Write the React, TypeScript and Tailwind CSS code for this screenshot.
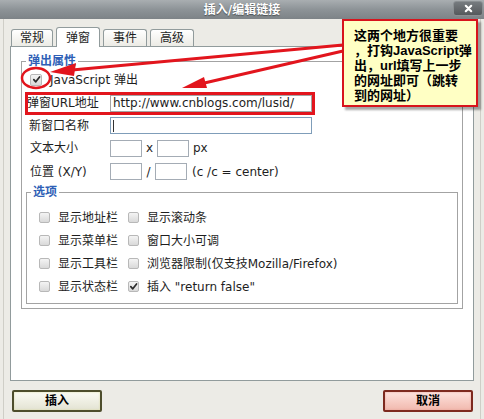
import type { FC, ReactNode } from "react";

const Check: FC<{ checked?: boolean; big?: boolean }> = ({ checked, big }) => (
	<span
		className={`inline-flex shrink-0 items-center justify-center rounded-[2px] border border-[#b8b8b8] bg-gradient-to-b from-[#f4f4f4] to-[#d9d9d9] ${big ? "h-[12px] w-[12px]" : "h-[11px] w-[11px]"}`}
	>
		{checked ? (
			<svg viewBox="0 0 10 10" className="h-[9px] w-[9px]">
				<path d="M2 5.2 L4.2 7.6 L8.4 2.2" fill="none" stroke="#2b2b2b" strokeWidth={1.9} strokeLinecap="round" strokeLinejoin="round" />
			</svg>
		) : null}
	</span>
);

const Legend: FC<{ children: ReactNode }> = ({ children }) => (
	<legend className="ml-[4px] px-[2px] text-[12px] font-bold leading-[14px] text-[#2f5fb6]">{children}</legend>
);

const options: [string, boolean, string, boolean][] = [
	["显示地址栏", false, "显示滚动条", false],
	["显示菜单栏", false, "窗口大小可调", false],
	["显示工具栏", false, "浏览器限制(仅支技Mozilla/Firefox)", false],
	["显示状态栏", false, "插入 \"return false\"", true]
];

const tabs = [
	{ label: "常规", w: "w-[42px]", active: false },
	{ label: "弹窗", w: "w-[44px]", active: true },
	{ label: "事件", w: "w-[44px]", active: false },
	{ label: "高级", w: "w-[44px]", active: false }
];

export default function App() {
	return (
		<div className="relative h-[419px] w-[484px] overflow-hidden bg-[#ecebe6] font-['DejaVu_Sans','Noto_Sans_CJK_SC',sans-serif] text-[12px] text-[#1e1e1e]">
			{/* title bar */}
			<div className="grid h-[19px] grid-cols-[1fr_auto_1fr] items-center bg-gradient-to-b from-[#a9aeb1] via-[#8d9397] to-[#7d8387]">
				<span />
				<span className="text-[12px] font-bold leading-none text-white [text-shadow:0_1px_1px_#4a4f52]">插入/编辑链接</span>
				<div className="flex h-full justify-end pr-[1px] pt-[1px]">
					<div className="flex h-[15px] w-[30px] items-center justify-center rounded-[3px] border border-[#8a8f92] bg-gradient-to-b from-[#767b7f] to-[#55595c]">
						<svg viewBox="0 0 10 10" className="h-[9px] w-[9px]">
							<path d="M2 2 L8 8 M8 2 L2 8" stroke="white" strokeWidth={2.4} strokeLinecap="round" />
						</svg>
					</div>
				</div>
			</div>

			{/* window body */}
			<div className="mx-[3px] flex h-[400px] flex-col border-x border-[#cfcec7]">
				{/* tabs */}
				<div className="flex h-[27px] items-end gap-[3px] pl-[7px]">
					{tabs.map(t => (
						<div
							key={t.label}
							className={`flex items-center justify-center rounded-t-[3px] border border-b-0 border-[#919b9c] text-[12px] ${t.w} ${
								t.active ? "relative z-10 -mb-px h-[20px] bg-white" : "h-[17px] bg-gradient-to-b from-white to-[#ecebe5]"
							}`}
						>
							{t.label}
						</div>
					))}
				</div>

				{/* panel */}
				<div className="ml-[6px] h-[335px] w-[464px] border border-[#919b9c] bg-white pt-[7px]">
					<fieldset className="mx-[10px] border border-[#a3a3a3] pb-[4px]">
						<Legend>弹出属性</Legend>
						<div className="flex flex-col pl-[5px]">
							<div className="flex h-[23px] items-center gap-[8px] pl-[3px]">
								<Check checked big />
								<span>JavaScript 弹出</span>
							</div>
							<div className="flex h-[24px] items-center">
								<span className="w-[83px]">弹窗URL地址</span>
								<div className="flex h-[17px] w-[202px] items-center border border-[#a4a4a4] px-[2px] leading-none">http://www.cnblogs.com/lusid/</div>
							</div>
							<div className="flex h-[21px] items-center">
								<span className="w-[83px] pl-[2px]">新窗口名称</span>
								<div className="flex h-[17px] w-[202px] items-center border border-[#7f9db9] px-[2px]">
									<span className="h-[12px] w-px bg-[#333]" />
								</div>
							</div>
							<div className="flex h-[24px] items-center">
								<span className="w-[83px] pl-[3px]">文本大小</span>
								<div className="h-[17px] w-[32px] border border-[#a4acb5]" />
								<span className="w-[15px] text-center">x</span>
								<div className="h-[17px] w-[32px] border border-[#a4acb5]" />
								<span className="pl-[4px]">px</span>
							</div>
							<div className="flex h-[23px] items-center">
								<span className="w-[83px] pl-[3px]">位置 (X/Y)</span>
								<div className="h-[17px] w-[32px] border border-[#a4acb5]" />
								<span className="w-[13px] text-center">/</span>
								<div className="h-[17px] w-[32px] border border-[#a4acb5]" />
								<span className="pl-[5px]">(c /c = center)</span>
							</div>
						</div>

						<fieldset className="mx-[4px] mt-[2px] border border-[#a3a3a3] pb-[5px] pt-[7px]">
							<Legend>选项</Legend>
							<div className="pl-[12px]">
								{options.map(([a, ac, b, bc]) => (
									<div key={a} className="grid h-[23px] grid-cols-[89px_auto] items-center">
										<div className="flex items-center gap-[8px]">
											<Check checked={ac} />
											<span>{a}</span>
										</div>
										<div className="flex items-center gap-[8px]">
											<Check checked={bc} />
											<span>{b}</span>
										</div>
									</div>
								))}
							</div>
						</fieldset>
					</fieldset>
				</div>

				{/* buttons */}
				<div className="mt-[9px] flex justify-between pl-[8px] pr-[7px]">
					<button className="flex h-[22px] w-[90px] items-center justify-center rounded-[2px] border-2 border-[#4d4d2c] bg-gradient-to-b from-[#fbfbf4] to-[#e3e3d3] text-[12px] font-bold text-black shadow-[inset_0_0_2px_#d9d99c]">
						插入
					</button>
					<button className="flex h-[22px] w-[90px] items-center justify-center rounded-[2px] border-2 border-[#7d2a1f] bg-gradient-to-b from-[#fde3de] to-[#f1b9ae] text-[12px] font-bold text-black shadow-[inset_0_0_2px_#e9a095]">
						取消
					</button>
				</div>
			</div>

			{/* annotations */}
			<svg className="pointer-events-none absolute left-0 top-0 h-[419px] w-[484px]" viewBox="0 0 484 419">
				<ellipse cx="36" cy="78" rx="14" ry="10" fill="none" stroke="#e2151d" strokeWidth="2.5" />
				<rect x="26.5" y="93.5" width="287" height="20" fill="none" stroke="#e2151d" strokeWidth="3" />
				<line x1="343" y1="45" x2="72" y2="70" stroke="#e2151d" strokeWidth="3" />
				<polygon points="50,72 76,63 74,76" fill="#e2151d" />
				<line x1="343" y1="51" x2="200" y2="84" stroke="#e2151d" strokeWidth="3" />
				<polygon points="182,88 204,77 207,88" fill="#e2151d" />
			</svg>

			<div className="absolute left-[342px] top-[19px] h-[88px] w-[136px] whitespace-nowrap border-2 border-[#d8141c] bg-[#ffffc4] pl-[10px] pt-[7px] font-['Liberation_Sans','Noto_Sans_CJK_SC',sans-serif] text-[13px] font-bold leading-[15px] text-black shadow-[3px_3px_2px_rgba(0,0,0,0.35)]">
				这两个地方很重要
				<br />，打钩JavaScript弹
				<br />出，url填写上一步
				<br />的网址即可（跳转
				<br />到的网址）
			</div>
		</div>
	);
}
